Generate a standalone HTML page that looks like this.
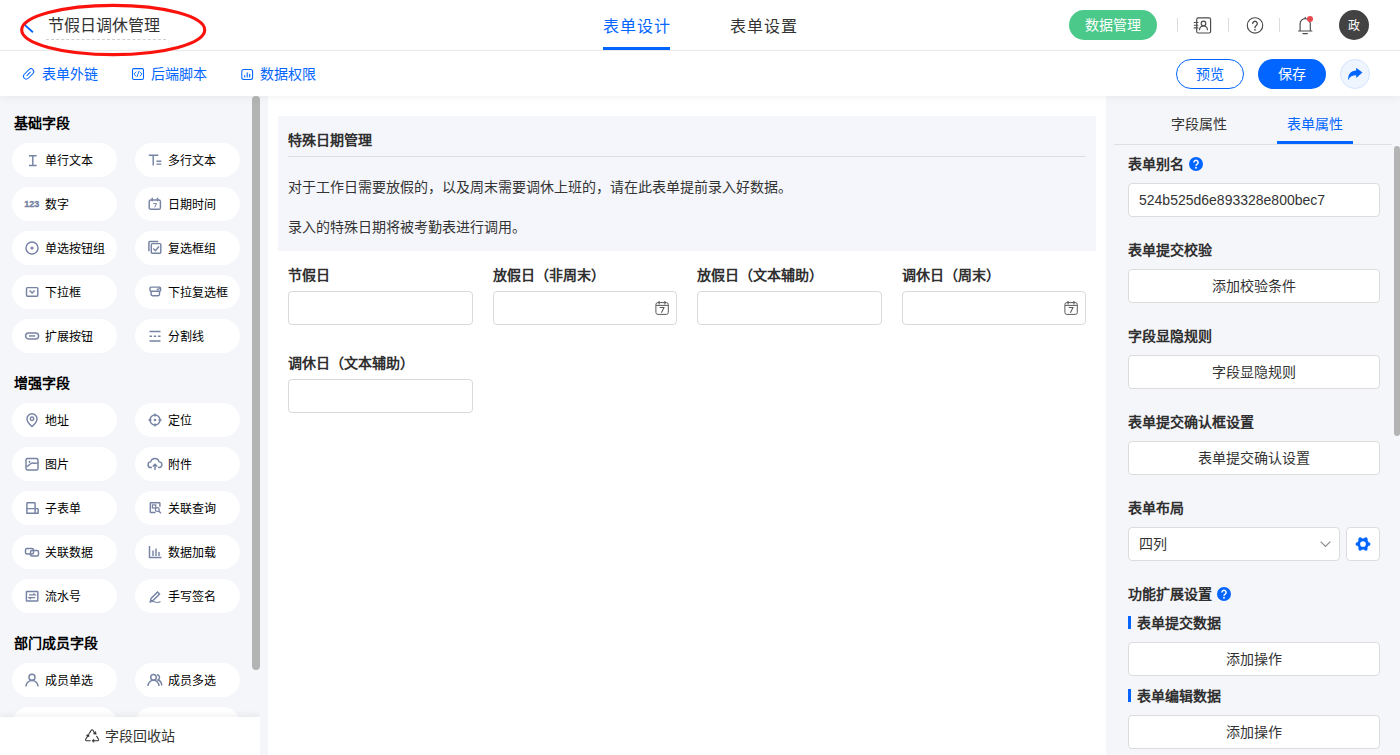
<!DOCTYPE html>
<html lang="zh-CN">
<head>
<meta charset="utf-8">
<title>节假日调休管理</title>
<style>
*{box-sizing:border-box;margin:0;padding:0}
html,body{width:1400px;height:755px;overflow:hidden;background:#fff}
body{font-family:"Liberation Sans",sans-serif;font-size:14px;color:#333;position:relative}
.abs{position:absolute}
svg{display:block;overflow:visible}
/* header */
#top{position:absolute;left:0;top:0;width:1400px;height:51px;background:#fff;border-bottom:1px solid #ececec}
#sub{position:absolute;left:0;top:51px;width:1400px;height:45px;background:#fff;box-shadow:0 2px 8px rgba(0,0,0,.05);z-index:5}
.t{position:absolute;white-space:nowrap;line-height:20px;height:20px}
.blue{color:#0265ff}
.pill{position:absolute;width:105px;height:34px;border-radius:17px;background:#fff;font-size:12px;color:#000}
.pill span{position:absolute;left:33px;top:8px;line-height:20px;white-space:nowrap}
.pill svg{position:absolute;left:12px;top:9px;width:16px;height:16px;stroke:#7683a3;fill:none;stroke-width:1.45}
.sec{position:absolute;left:14px;font-weight:bold;font-size:14px;color:#000;line-height:20px}
#left{position:absolute;left:0;top:96px;width:260px;height:659px;background:#f5f6fa;overflow:hidden}
#mid{position:absolute;left:268px;top:96px;width:838px;height:659px;background:#fff}
#gap{position:absolute;left:260px;top:96px;width:8px;height:659px;background:#f5f6fa}
#right{position:absolute;left:1106px;top:96px;width:294px;height:659px;background:#f5f6fa;overflow:hidden}
.inp{position:absolute;height:34px;border:1px solid #d9d9d9;border-radius:4px;background:#fff}
.lab{position:absolute;font-weight:bold;font-size:14px;color:#2f2f2f;line-height:20px;white-space:nowrap}
.rbtn{position:absolute;left:22px;width:252px;height:34px;border:1px solid #dcdcdc;border-radius:4px;background:#fff;text-align:center;line-height:32px;font-size:14px;color:#333}
.rlab{position:absolute;left:22px;font-weight:bold;font-size:14px;color:#2f2f2f;line-height:20px;white-space:nowrap}
</style>
</head>
<body>
<!-- TOP BAR -->
<div id="top">
  <svg class="abs" style="left:23px;top:16px" width="12" height="18" viewBox="0 0 12 18"><path d="M7.600 3 L1.400 8.600 L9.900 16.200" fill="none" stroke="#0265ff" stroke-width="1.900"/></svg>
  <div class="t" style="left:48px;top:16px;font-size:16px;color:#333">节假日调休管理</div>
  <div class="abs" style="left:46px;top:39px;width:120px;border-top:1px dashed #cfcfcf"></div>
  <svg class="abs" style="left:0;top:0;z-index:9" width="230" height="62"><ellipse cx="113.2" cy="30" rx="91.5" ry="24.6" fill="none" stroke="#fc120c" stroke-width="3.100"/></svg>
  <div class="t blue" style="left:603px;top:16.500px;font-size:16px;letter-spacing:1px">表单设计</div>
  <div class="abs" style="left:603px;top:47px;width:67px;height:3px;background:#0265ff"></div>
  <div class="t" style="left:730px;top:16.500px;font-size:16px;color:#333;letter-spacing:1px">表单设置</div>
  <div class="abs" style="left:1069px;top:10px;width:88px;height:30px;border-radius:15px;background:#4bc98a;color:#fff;text-align:center;line-height:30px;font-size:14px">数据管理</div>
  <div class="abs" style="left:1177px;top:18px;width:1px;height:14px;background:#dcdcdc"></div>
  <div class="abs" style="left:1228px;top:18px;width:1px;height:14px;background:#dcdcdc"></div>
  <div class="abs" style="left:1279px;top:18px;width:1px;height:14px;background:#dcdcdc"></div>

  <svg class="abs" style="left:1190px;top:14px" width="24" height="22" viewBox="1190 14 24 22" fill="none" stroke="#4a4a4a" stroke-width="1.150" stroke-linecap="round">
    <rect x="1196.700" y="17.900" width="13.900" height="15.100" rx="1.500"/>
    <path d="M1194.300 22.500h3.600M1194.300 25.200h3.600M1194.300 27.900h3.600"/>
    <circle cx="1203.500" cy="23.400" r="2.300"/>
    <path d="M1199.500 29.700c.3-2.300 2-3.700 4-3.700s3.700 1.400 4 3.700"/>
  </svg>
  <svg class="abs" style="left:1244px;top:14px" width="24" height="22" viewBox="1244 14 24 22" fill="none" stroke="#4a4a4a" stroke-width="1.150" stroke-linecap="round">
    <circle cx="1255" cy="25.400" r="7.700"/>
    <path d="M1252.700 23.600a2.300 2.300 0 1 1 3.600 1.900c-.8.500-1.300 1-1.300 1.900v.3" stroke-width="1.300"/>
    <circle cx="1255" cy="29.900" r=".8" fill="#454545" stroke="none"/>
  </svg>
  <svg class="abs" style="left:1294px;top:14px" width="24" height="22" viewBox="1294 14 24 22" fill="none" stroke="#4a4a4a" stroke-width="1.150" stroke-linecap="round" stroke-linejoin="round">
    <path d="M1298.600 31h13.300M1300.100 31v-7.200a5.100 5.100 0 0 1 10.200 0v7.200M1303 33.600h4.400M1305.200 17.300v1.200"/>
    <circle cx="1310" cy="19" r="3" fill="#e9484e" stroke="none"/>
  </svg>
  <div class="abs" style="left:1339px;top:10px;width:30px;height:30px;border-radius:15px;background:#434343;color:#fff;text-align:center;line-height:33px;font-size:12px">政</div>
</div>
<!-- SUB BAR -->
<div id="sub">

  <svg class="abs" style="left:20px;top:14px" width="18" height="18" viewBox="20 65 18 18" fill="none" stroke="#0265ff" stroke-width="1.050" stroke-linecap="round">
    <g transform="rotate(-45 28.600 73.900)"><rect x="22.500" y="71.100" width="12.200" height="5.600" rx="2.800" stroke-width=".95"/><path d="M26.200 73.900h4.800" stroke-width=".95"/></g>
  </svg>
  <svg class="abs" style="left:130px;top:14px" width="18" height="18" viewBox="130 65 18 18" fill="none" stroke="#0265ff" stroke-width="1.050" stroke-linecap="round" stroke-linejoin="round">
    <rect x="132.500" y="68.600" width="11" height="10.800" rx="1.400"/>
    <path d="M135.900 72l-2 2 2 2M140.100 72l2 2-2 2M139 71.200l-2 5.600" stroke-width=".9"/>
  </svg>
  <svg class="abs" style="left:239px;top:14px" width="18" height="18" viewBox="239 65 18 18" fill="none" stroke="#0265ff" stroke-width="1.050" stroke-linecap="round">
    <rect x="241.800" y="69.400" width="10.800" height="10" rx="2"/>
    <path d="M244.700 77v-1.500M247.200 77v-4.300M249.700 77v-2.800" stroke-width="1.100"/>
  </svg>
  <div class="t blue" style="left:42px;top:13px">表单外链</div>
  <div class="t blue" style="left:151px;top:13px">后端脚本</div>
  <div class="t blue" style="left:260px;top:13px">数据权限</div>
  <div class="abs" style="left:1176px;top:8px;width:68px;height:30px;border-radius:15px;border:1px solid #0265ff;color:#0265ff;text-align:center;line-height:28px;font-size:14px">预览</div>
  <div class="abs" style="left:1258px;top:8px;width:68px;height:30px;border-radius:15px;background:#0265ff;color:#fff;text-align:center;line-height:30px;font-size:14px">保存</div>
  <div class="abs" style="left:1340px;top:8px;width:30px;height:30px;border-radius:15px;background:#eff5ff;border:1px solid #d5e4fe"></div>
  <svg class="abs" style="left:1340px;top:8px" width="30" height="30" viewBox="1340 59 30 30"><path fill="#0265ff" d="M1356.200 67.700l6.200 4.900-6.200 5.300v-2.600c-3.700 0-6.400 1.300-7.900 4.900-.7-6.200 2.700-9.600 7.900-9.800z"/></svg>
</div>
<!-- LEFT -->
<div id="left">
<div class="sec" style="top:17px">基础字段</div>
<div class="pill" style="left:12px;top:47px"><svg viewBox="0 0 16 16"><path d="M5 3.800h7.600M5 13.500h7.600M8.800 3.800v9.700"/></svg><span>单行文本</span></div>
<div class="pill" style="left:135px;top:47px"><svg viewBox="0 0 16 16"><path d="M1.800 3.300h9.500M6.200 3.300v10.200M9.500 9.300h4.800M9.500 12.100h4.800"/></svg><span>多行文本</span></div>
<div class="pill" style="left:12px;top:91px"><svg viewBox="0 0 16 16"><text x="0.300" y="11" style="font:bold 9px 'Liberation Sans',sans-serif;stroke:#76829f;stroke-width:.35;fill:#76829f">123</text></svg><span>数字</span></div>
<div class="pill" style="left:135px;top:91px"><svg viewBox="0 0 16 16"><rect x="2.200" y="3.900" width="11.200" height="9.400" rx="1.600"/><path d="M5.200 1.800v3.400M10.500 1.800v3.400"/><path d="M6.200 7.600h3.300l-1.800 3.800" stroke-width="1"/></svg><span>日期时间</span></div>
<div class="pill" style="left:12px;top:135px"><svg viewBox="0 0 16 16"><circle cx="8" cy="8" r="6"/><circle cx="8" cy="8" r="1.6" fill="#7a86a5" stroke="none"/></svg><span>单选按钮组</span></div>
<div class="pill" style="left:135px;top:135px"><svg viewBox="0 0 16 16"><rect x="4.300" y="3.600" width="9.500" height="9.700" rx="1"/><path d="M1.900 11.300V2.200a.7.700 0 0 1 .7-.7H11.300M6.300 8.600l2.100 2.100 3.600-4.200"/></svg><span>复选框组</span></div>
<div class="pill" style="left:12px;top:179px"><svg viewBox="0 0 16 16"><rect x="2.500" y="3.600" width="11.300" height="8.700" rx="1"/><path d="M5.600 6.500l2.500 2.500 2.500-2.500"/></svg><span>下拉框</span></div>
<div class="pill" style="left:135px;top:179px"><svg viewBox="0 0 16 16"><rect x="3" y="3.100" width="10.600" height="4.200" rx="1"/><path d="M9.800 4.600l1.200 1.300 2.300-2.600" stroke-width="1.100"/><path d="M4.100 7.300v3a1.400 1.400 0 0 0 1.400 1.400h5.600a1.400 1.400 0 0 0 1.400-1.400v-3"/></svg><span>下拉复选框</span></div>
<div class="pill" style="left:12px;top:223px"><svg viewBox="0 0 16 16"><rect x="1.600" y="5" width="13" height="5.900" rx="2.950"/><path d="M5 7.950h6.200"/></svg><span>扩展按钮</span></div>
<div class="pill" style="left:135px;top:223px"><svg viewBox="0 0 16 16"><path d="M2.500 3.500h11M2.500 13h11M2.500 8.250h2.500M6.750 8.250h2.500M11 8.250h2.500"/></svg><span>分割线</span></div>
<div class="sec" style="top:277px">增强字段</div>
<div class="pill" style="left:12px;top:307px"><svg viewBox="0 0 16 16"><path d="M8 14.500s-5-4.300-5-7.800a5 5 0 0 1 10 0c0 3.500-5 7.800-5 7.800z"/><circle cx="8" cy="6.700" r="1.700"/></svg><span>地址</span></div>
<div class="pill" style="left:135px;top:307px"><svg viewBox="0 0 16 16"><circle cx="8" cy="8" r="5"/><circle cx="8" cy="8" r="1.300" fill="#7a86a5" stroke="none"/><path d="M8 1.500v3M8 11.500v3M1.500 8h3M11.500 8h3"/></svg><span>定位</span></div>
<div class="pill" style="left:12px;top:351px"><svg viewBox="0 0 16 16"><rect x="2" y="2.500" width="12" height="11.500" rx="1.500"/><path d="M2.500 10.500c3-.5 3.500-3.500 6-3.500s3 1 5.500-.5"/><path d="M5.500 4.800v2M4.500 5.800h2" stroke-width="1"/></svg><span>图片</span></div>
<div class="pill" style="left:135px;top:351px"><svg viewBox="0 0 16 16"><path d="M5 11.500h-1a2.800 2.800 0 0 1-.3-5.600 4.300 4.300 0 0 1 8.400 0 2.800 2.800 0 0 1-.1 5.600h-1"/><path d="M8 14v-5.500M5.800 10.500l2.200-2.200 2.200 2.200"/></svg><span>附件</span></div>
<div class="pill" style="left:12px;top:395px"><svg viewBox="0 0 16 16"><path d="M2.900 13.300V3.400a.7.700 0 0 1 .7-.7h6.800a.7.700 0 0 1 .7.700V13.300zM2.900 8.600h10.500a.7.700 0 0 1 .7.700v4h-3"/></svg><span>子表单</span></div>
<div class="pill" style="left:135px;top:395px"><svg viewBox="0 0 16 16"><path d="M12.900 6.800V3.500a.7.700 0 0 0-.7-.7H4a.7.700 0 0 0-.7.700v8.400a.7.700 0 0 0 .7.700h4.500"/><rect x="5.400" y="4.900" width="3.400" height="3.100" stroke-width="1.200"/><circle cx="10.300" cy="9.600" r="1.900" stroke-width="1.200"/><path d="M11.700 11l2.200 2.200"/></svg><span>关联查询</span></div>
<div class="pill" style="left:12px;top:439px"><svg viewBox="0 0 16 16"><rect x="1.500" y="4.500" width="8" height="5.500" rx="1.500"/><rect x="6.500" y="6.500" width="8" height="5.500" rx="1.500"/></svg><span>关联数据</span></div>
<div class="pill" style="left:135px;top:439px"><svg viewBox="0 0 16 16"><path d="M2.500 2v11.500h12M6 12V6.500M9 12V4.500M12 12V8"/></svg><span>数据加载</span></div>
<div class="pill" style="left:12px;top:483px"><svg viewBox="0 0 16 16"><rect x="2.400" y="3.500" width="11.400" height="9.500" rx=".6"/><path d="M5 6.900h6.200l-1.800-1.500M11.200 9.600H5l1.800 1.500" stroke-width="1.200"/></svg><span>流水号</span></div>
<div class="pill" style="left:135px;top:483px"><svg viewBox="0 0 16 16"><path d="M4 10.500l6.500-6.500 2 2L6 12.500l-2.500.5z"/><path d="M2.500 14.500c2-1.500 4-1 5.500-.5s3.500 1 5.500-.5" stroke-width="1.100"/></svg><span>手写签名</span></div>
<div class="sec" style="top:537px">部门成员字段</div>
<div class="pill" style="left:12px;top:567px"><svg viewBox="0 0 16 16"><circle cx="8" cy="5.300" r="3"/><path d="M2 14.500c0-3.500 2.700-6 6-6s6 2.500 6 6"/></svg><span>成员单选</span></div>
<div class="pill" style="left:135px;top:567px"><svg viewBox="0 0 16 16"><circle cx="6.500" cy="5.300" r="2.800"/><path d="M1 14c0-3.300 2.500-5.700 5.500-5.700s5.500 2.400 5.500 5.700"/><path d="M10 2.700a2.800 2.800 0 0 1 1 5.300c2 .6 3.700 2.700 3.700 5.500"/></svg><span>成员多选</span></div>
<div class="pill" style="left:12px;top:611px"></div>
<div class="pill" style="left:135px;top:611px"></div>
<div class="abs" style="left:252px;top:0;width:8px;height:574px;background:#b4b4b4;border-radius:4px"></div>
<div class="abs" style="left:0;top:621px;width:260px;height:38px;background:#fff;box-shadow:0 -2px 6px rgba(0,0,0,.06)">
<svg class="abs" style="left:84.500px;top:11.600px" width="15" height="14" viewBox="0 0 15 14" fill="none" stroke="#333" stroke-width="1.100" stroke-linecap="round" stroke-linejoin="round"><path d="M4.500 4.100L6.200 1.200a1 1 0 0 1 1.700 0L9.900 4.500"/><path d="M2.900 6.700L.7 10.300a.9.900 0 0 0 .8 1.400H5.200"/><path d="M11.700 7.400l1.800 2.900a.9.900 0 0 1-.8 1.400H8"/><path d="M8.600 4.900l2.700.4-.7-2.600zM1.500 6.700l2.600 1-.2-2.700zM8.700 10.200L6.900 11.700l1.800 1.500z" fill="#333" stroke-width=".5"/></svg>
<div class="t" style="left:105px;top:9px;font-size:14px;color:#333">字段回收站</div></div>
</div>
<div id="gap"></div>
<!-- MID -->
<div id="mid">
<div class="abs" style="left:10px;top:20px;width:818px;height:135px;background:#f5f6fb"></div>
<div class="lab" style="left:20px;top:34px;color:#2f2f2f">特殊日期管理</div>
<div class="abs" style="left:20px;top:60px;width:798px;height:1px;background:#dedede"></div>
<div class="t" style="left:20px;top:81px;color:#333">对于工作日需要放假的，以及周末需要调休上班的，请在此表单提前录入好数据。</div>
<div class="t" style="left:20px;top:121px;color:#333">录入的特殊日期将被考勤表进行调用。</div>
<div class="lab" style="left:20px;top:169px">节假日</div>
<div class="inp" style="left:20px;top:195px;width:184.5px"></div>
<div class="lab" style="left:224.5px;top:169px">放假日（非周末）</div>
<div class="inp" style="left:224.5px;top:195px;width:184.5px"><svg class="abs" style="left:161px;top:10px" width="15" height="14" viewBox="0 0 15 14" fill="none" stroke="#5a5a5a" stroke-width="1"><rect x="0.900" y="0.600" width="12.400" height="11.800" rx="2"/><path d="M0.900 3.400h12.400"/><path d="M4.100 -0.900v3.300M9.900 -0.900v3.300" stroke-width="1.100"/><path d="M4.700 5.400h4.300l-2.600 5.400" stroke-width="1.050"/></svg></div>
<div class="lab" style="left:429px;top:169px">放假日（文本辅助）</div>
<div class="inp" style="left:429px;top:195px;width:184.5px"></div>
<div class="lab" style="left:633.5px;top:169px">调休日（周末）</div>
<div class="inp" style="left:633.5px;top:195px;width:184.5px"><svg class="abs" style="left:161px;top:10px" width="15" height="14" viewBox="0 0 15 14" fill="none" stroke="#5a5a5a" stroke-width="1"><rect x="0.900" y="0.600" width="12.400" height="11.800" rx="2"/><path d="M0.900 3.400h12.400"/><path d="M4.100 -0.900v3.300M9.900 -0.900v3.300" stroke-width="1.100"/><path d="M4.700 5.400h4.300l-2.600 5.400" stroke-width="1.050"/></svg></div>
<div class="lab" style="left:20px;top:257px">调休日（文本辅助）</div>
<div class="inp" style="left:20px;top:283px;width:184.5px"></div>
</div>
<!-- RIGHT -->
<div id="right">
<div class="t" style="left:65px;top:18px;color:#333">字段属性</div>
<div class="t blue" style="left:181px;top:18px">表单属性</div>
<div class="abs" style="left:8px;top:48px;width:278px;height:1px;background:#e0e0e0"></div>
<div class="abs" style="left:171px;top:45px;width:76px;height:3px;background:#0265ff"></div>
<div class="rlab" style="top:58px">表单别名</div>
<svg class="abs" style="left:83.40000000000009px;top:61px" width="14" height="14" viewBox="0 0 14 14"><circle cx="7" cy="7" r="7" fill="#0265ff"/><path d="M4.900 5.400a2.100 2.100 0 1 1 3.200 1.800c-.7.400-1.100.8-1.100 1.600" fill="none" stroke="#fff" stroke-width="1.500"/><circle cx="7" cy="10.700" r=".95" fill="#fff"/></svg>
<div class="rbtn" style="top:87px;text-align:left;padding-left:10px">524b525d6e893328e800bec7</div>
<div class="rlab" style="top:144px">表单提交校验</div>
<div class="rbtn" style="top:173px">添加校验条件</div>
<div class="rlab" style="top:230px">字段显隐规则</div>
<div class="rbtn" style="top:259px">字段显隐规则</div>
<div class="rlab" style="top:316px">表单提交确认框设置</div>
<div class="rbtn" style="top:345px">表单提交确认设置</div>
<div class="rlab" style="top:402px">表单布局</div>
<div class="rbtn" style="top:431px;width:212px;text-align:left;padding-left:10px">四列<svg class="abs" style="left:191px;top:13px" width="11" height="7" viewBox="0 0 11 7"><path d="M0.700 0.700L5.500 5.500L10.300 0.700" fill="none" stroke="#8a8a8a" stroke-width="1.200"/></svg></div>
<div class="rbtn" style="top:431px;left:240px;width:34px"><svg class="abs" style="left:8px;top:7.750px" width="16" height="16" viewBox="0 0 16 16"><circle cx="8" cy="8" r="4.300" fill="none" stroke="#0265ff" stroke-width="2.900"/><circle cx="13.60" cy="8.00" r="1.85" fill="#0265ff"/><circle cx="10.80" cy="12.85" r="1.85" fill="#0265ff"/><circle cx="5.20" cy="12.85" r="1.85" fill="#0265ff"/><circle cx="2.40" cy="8.00" r="1.85" fill="#0265ff"/><circle cx="5.20" cy="3.15" r="1.85" fill="#0265ff"/><circle cx="10.80" cy="3.15" r="1.85" fill="#0265ff"/></svg></div>
<div class="rlab" style="top:488px">功能扩展设置</div>
<svg class="abs" style="left:111.20000000000005px;top:491px" width="14" height="14" viewBox="0 0 14 14"><circle cx="7" cy="7" r="7" fill="#0265ff"/><path d="M4.900 5.400a2.100 2.100 0 1 1 3.200 1.800c-.7.400-1.100.8-1.100 1.600" fill="none" stroke="#fff" stroke-width="1.500"/><circle cx="7" cy="10.700" r=".95" fill="#fff"/></svg>
<div class="abs" style="left:22px;top:520px;width:3px;height:13px;background:#0265ff"></div>
<div class="rlab" style="left:31px;top:517px">表单提交数据</div>
<div class="rbtn" style="top:546px">添加操作</div>
<div class="abs" style="left:22px;top:593px;width:3px;height:13px;background:#0265ff"></div>
<div class="rlab" style="left:31px;top:590px">表单编辑数据</div>
<div class="rbtn" style="top:619px">添加操作</div>
<div class="abs" style="left:288px;top:50px;width:6px;height:290px;background:#b4b4b4;border-radius:3px"></div>
</div>
</body>
</html>
